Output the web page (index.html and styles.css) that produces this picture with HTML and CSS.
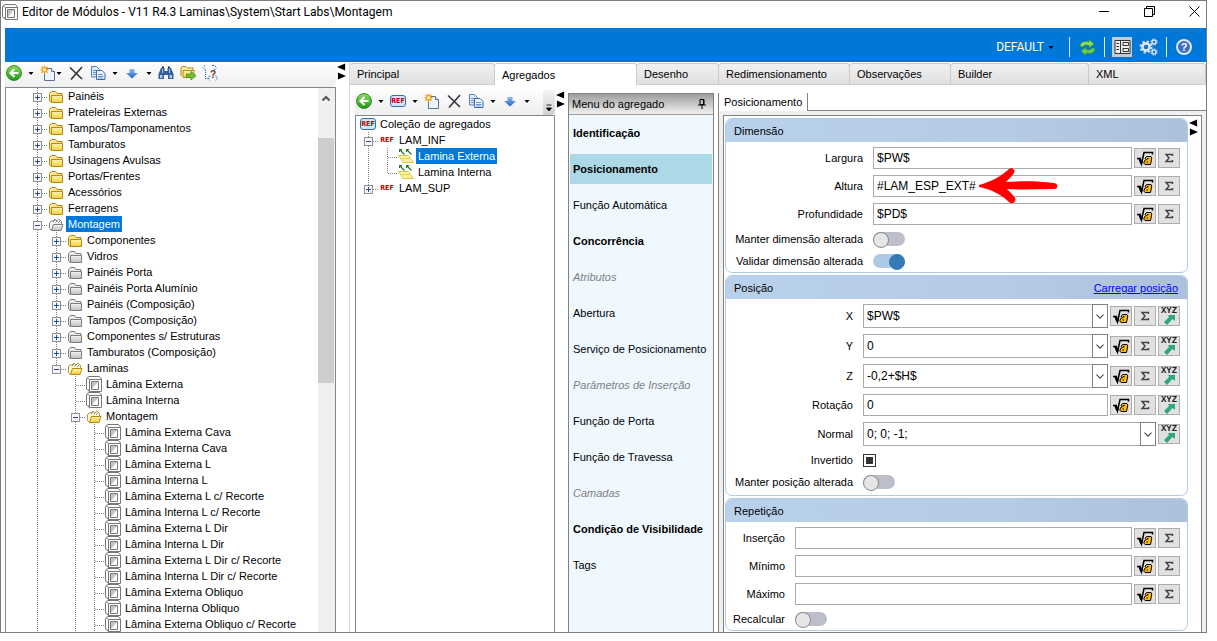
FILE: index.html
```html
<!DOCTYPE html>
<html lang="pt-BR">
	<head>
		<title>Editor de Módulos</title>
		<meta charset="utf-8">
		<meta name="viewport" content="width=device-width, initial-scale=1.0">
		<link rel="stylesheet" href="styles.css">
	</head>
	<body>
		<!-- shared icons -->
		<svg class="sprite" aria-hidden="true">
			<defs>
				<linearGradient id="gFolder" x1="0" y1="0" x2="0" y2="1"><stop offset="0" stop-color="#fff6a8"/><stop offset="1" stop-color="#f6cc40"/></linearGradient>
				<linearGradient id="gGray" x1="0" y1="0" x2="0" y2="1"><stop offset="0" stop-color="#f4f4f4"/><stop offset="1" stop-color="#bdbdbd"/></linearGradient>
				<linearGradient id="gGreen" x1="0" y1="0" x2="0" y2="1"><stop offset="0" stop-color="#8ada5c"/><stop offset="1" stop-color="#1f9a14"/></linearGradient>
				<linearGradient id="gBlue" x1="0" y1="0" x2="0" y2="1"><stop offset="0" stop-color="#8fbcf2"/><stop offset="1" stop-color="#1e5fc4"/></linearGradient>
			</defs>
			<symbol id="i-plus" viewBox="0 0 9 9"><rect x=".5" y=".5" width="8" height="8" fill="#f6f6f6" stroke="#919191"/><path d="M2 4.5h5M4.5 2v5" stroke="#2a4a9c"/></symbol>
			<symbol id="i-minus" viewBox="0 0 9 9"><rect x=".5" y=".5" width="8" height="8" fill="#f6f6f6" stroke="#919191"/><path d="M2 4.5h5" stroke="#2a4a9c"/></symbol>
			<symbol id="i-folder" viewBox="0 0 16 16"><path d="M3.5 14.5l-2-1.500V5.500l2-2h4l1.500 2h5v2" fill="#fbe88a" stroke="#a8851a"/><path d="M3.500 7.500h11v7h-11z" fill="url(#gFolder)" stroke="#b08a12"/></symbol>
			<symbol id="i-folder-gray" viewBox="0 0 16 16"><path d="M3.5 14.5l-2-1.500V5.500l2-2h4l1.500 2h5v2" fill="#e8e8e8" stroke="#7d7d7d"/><path d="M3.500 7.500h11v7h-11z" fill="url(#gGray)" stroke="#7d7d7d"/></symbol>
			<symbol id="i-open" viewBox="0 0 16 16"><path d="M3.500 14.500l-2-2V6.500l1.500-1.500h2l2-2 2 2 2-2 2.500 2.500v3" fill="#fff8d8" stroke="#b39a3c"/><path d="M5 6l2-2M7.500 6.500l2-2M10 7l2-2" stroke="#7e8fc0"/><path d="M3.500 14.500l2-6h9.500l-2 6z" fill="url(#gFolder)" stroke="#b08a12"/></symbol>
			<symbol id="i-open-gray" viewBox="0 0 16 16"><path d="M3.500 14.500l-2-2V6.500l1.500-1.500h2l2-2 2 2 2-2 2.500 2.500v3" fill="#f2f2f2" stroke="#8a8a8a"/><path d="M5 6l2-2M7.500 6.500l2-2M10 7l2-2" stroke="#808080"/><path d="M3.500 14.500l2-6h9.500l-2 6z" fill="url(#gGray)" stroke="#7d7d7d"/></symbol>
			<symbol id="i-module" viewBox="0 0 16 16"><path d="M.5 3L2.500.5h11l2 2.500v12.500h-12L.500 13z" fill="#fff" stroke="#777"/><path d="M3.500 3.500h12M3.500 3.500v12M3.500 3.500L1 1.500M3.500 15l-2-2" fill="none" stroke="#777"/><path d="M5.500 5.500h7v8h-7z" fill="#fff" stroke="#777"/><path d="M6 6h6l-6 7z" fill="#c4c4c4"/></symbol>
			<symbol id="i-piece" viewBox="0 0 16 16"><path d="M.5 7.500H10l5.500 7H5z" fill="#fbf39a" stroke="#d6ca50"/><path d="M4 10.500h8" stroke="#e2d050"/><path d="M1.500 1.500l5 5M8.500 1.500l5 5" stroke="#1c7a1c" stroke-width="1.200"/><path d="M1.500 4V1.500H4M8.500 4V1.500H11" fill="none" stroke="#1c7a1c"/></symbol>
			<symbol id="i-back" viewBox="0 0 16 16"><circle cx="8" cy="8" r="7.500" fill="url(#gGreen)" stroke="#1d8212" stroke-width=".8"/><path d="M12.500 8H5M8.500 4L4.500 8l4 4" fill="none" stroke="#fff" stroke-width="2.200"/></symbol>
			<symbol id="i-new" viewBox="0 0 16 16"><path d="M4.500 3.500h7l3 3v9h-10z" fill="#eef4fc" stroke="#5c7093"/><path d="M11.500 3.500v3h3" fill="#fff" stroke="#5c7093"/><path d="M4.500 0l1 2.300L8 1.300 7 3.800l2 1-2 1 1 2.500-2.500-1-1 2-1-2L1 8.300l1-2.500-2-1 2-1L1 1.300l2.500 1z" fill="#f0a020"/><circle cx="4.500" cy="4.800" r="1.800" fill="#fff0a0"/></symbol>
			<symbol id="i-delete" viewBox="0 0 16 16"><path d="M2 2.500L14 14M14 2L3 14.500" stroke="#333a40" stroke-width="1.700"/></symbol>
			<symbol id="i-copy" viewBox="0 0 16 16"><path d="M1.500 1.500h5l3 3v7.500h-8z" fill="#dceafb" stroke="#5580bd"/><path d="M3 5.500h4M3 7.500h4M3 9.500h3" stroke="#6d97d0"/><path d="M6.500 5.500h5.500l3 3v6h-8.500z" fill="#eaf3ff" stroke="#3c68a8"/><path d="M8 9.500h5M8 11.500h5.500M8 13h5" stroke="#6d97d0"/></symbol>
			<symbol id="i-down" viewBox="0 0 16 16"><path d="M5.500 4h5v4H14l-6 5.500L2 8h3.500z" fill="url(#gBlue)"/></symbol>
			<symbol id="i-find" viewBox="0 0 16 16"><path d="M3 3h3.500v3h3V3H13l2.500 6v5H10v-4H6v4H.500V9z" fill="#355f9c"/><path d="M4 1.500h2V3H4zM10 1.500h2V3h-2z" fill="#1c3560"/><path d="M2 10h2.500v3H2zM11.500 10H14v3h-2.500zM4 4h1v4H4zM11 4h1v4h-1z" fill="#a9c9f0"/></symbol>
			<symbol id="i-export" viewBox="0 0 16 16"><path d="M1 11V3l1-1.500h4L7.500 3H13v2" fill="#fdf0a4" stroke="#b08a12"/><path d="M3 5.500h11v7H3z" fill="url(#gFolder)" stroke="#b08a12"/><path d="M6.500 9H11V6.500l5 4.200-5 4.300v-2.500H6.500z" fill="#6fc62e" stroke="#3a7f16" stroke-width=".7"/></symbol>
			<symbol id="i-caret" viewBox="0 0 6 16"><path d="M.5 7h5L3 10z" fill="#000"/></symbol>
			<symbol id="i-root" viewBox="0 0 20 18"><path d="M2 9.500h2.500L6.500 15 9 3.500h8.500v2" fill="none" stroke="#000" stroke-width="1.500"/><path d="M4.500 9l2 5.500" stroke="#000" stroke-width="2.600"/><path d="M10 9.500l1.500-2h4.500l.8 1.500-1.300 6.500H10l-1.200-1.500.8-2.500 2-1z" fill="#fcbb12" stroke="#000"/><path d="M12 9.700h1.500M11.500 13h1.500" stroke="#000" stroke-width="1.200"/></symbol>
			<symbol id="i-sum" viewBox="0 0 12 12"><path d="M9.500 4V2.500H3L6 6 3 9.500h6.500V8" fill="none" stroke="#444" stroke-width="1.400"/></symbol>
			<symbol id="i-needle" viewBox="0 0 11 10"><path d="M4 0h7v6L8.500 4 3 10 0 7l5-5z" fill="#2ea583"/></symbol>
			<symbol id="i-chevron" viewBox="0 0 16 22"><path d="M4 9.500l4 4 4-4" fill="none" stroke="#444" stroke-width="1.200"/></symbol>
			<symbol id="i-splitter" viewBox="0 0 10 18"><path d="M9 0v8L0 4zM1 10v8l9-4z" fill="#000"/></symbol>
			<symbol id="i-pin" viewBox="0 0 10 12"><path d="M3 1.500h4v5H3zM1 7h8M5 7v4" fill="none" stroke="#000"/><path d="M6.500 1.500V7" stroke="#000"/></symbol>
		</svg>

		<div class="window">
			<header class="titlebar">
				<svg class="icon"><use href="#i-module"/></svg>
				<h1 class="title">Editor de Módulos - V11 R4.3 Laminas\System\Start Labs\Montagem</h1>
				<div class="win-buttons">
					<button class="win-btn" aria-label="Minimizar"><svg viewBox="0 0 11 11"><path d="M0 5.500h10" stroke="#000"/></svg></button>
					<button class="win-btn" aria-label="Restaurar"><svg viewBox="0 0 11 11"><path d="M.5 2.500h8v8h-8zM2.500 2.500v-2h8v8h-2" fill="none" stroke="#000"/></svg></button>
					<button class="win-btn" aria-label="Fechar"><svg viewBox="0 0 11 11"><path d="M.5.500l10 10M10.500.500l-10 10" stroke="#000"/></svg></button>
				</div>
			</header>

			<div class="ribbon">
				<button class="profile">DEFAULT <svg class="caret"><use href="#i-caret"/></svg></button>
				<span class="sep"></span>
				<button class="ribbon-btn" aria-label="Atualizar"><svg viewBox="0 0 20 20"><path d="M3 9.500c0-4 4-6 9-4.500V2.500l5 4.500-5 4V8.500c-3-1-5-.500-6 1.500z" fill="#8adc5c" stroke="#2f8f2a" stroke-width=".7"/><path d="M18 11.500c0 4-4 6-9 4.500v2.500L4 14l5-4v2.500c3 1 5 .5 6-1.500z" fill="#6cce4c" stroke="#2f8f2a" stroke-width=".7"/></svg></button>
				<span class="sep"></span>
				<button class="ribbon-btn pressed" aria-label="Propriedades"><svg viewBox="0 0 20 20"><path d="M3 3.500h15v13H3zM8.500 3.500v13" fill="#eee" stroke="#333"/><path d="M4.500 6.500h2.500M4.500 9.500h2.500M4.500 12.500h2.500M11 5.500h5.500v3H11zM11 11.500h5.500v3H11z" fill="none" stroke="#333"/></svg></button>
				<button class="ribbon-btn" aria-label="Configurações"><svg viewBox="0 0 20 20"><circle cx="7" cy="10" r="3.600" fill="none" stroke="#dfe5ee" stroke-width="2.600"/><circle cx="7" cy="10" r="5.600" fill="none" stroke="#dfe5ee" stroke-width="1.800" stroke-dasharray="2.200 2.200"/><circle cx="15" cy="5" r="2" fill="none" stroke="#dfe5ee" stroke-width="1.500"/><circle cx="15" cy="5" r="3.200" fill="none" stroke="#dfe5ee" stroke-dasharray="1.200 1.300"/><circle cx="15" cy="15" r="2" fill="none" stroke="#dfe5ee" stroke-width="1.500"/><circle cx="15" cy="15" r="3.200" fill="none" stroke="#dfe5ee" stroke-dasharray="1.200 1.300"/></svg></button>
				<span class="sep"></span>
				<button class="help" aria-label="Ajuda">?</button>
			</div>

			<div class="workspace">
				<aside class="explorer">
					<div class="toolbar">
						<button class="tool" aria-label="Voltar"><svg class="icon"><use href="#i-back"/></svg></button>
						<button class="drop" aria-label="Mais"><svg class="caret"><use href="#i-caret"/></svg></button>
						<button class="tool" aria-label="Novo"><svg class="icon"><use href="#i-new"/></svg></button>
						<button class="drop joined" aria-label="Mais"><svg class="caret"><use href="#i-caret"/></svg></button>
						<button class="tool" aria-label="Excluir"><svg class="icon"><use href="#i-delete"/></svg></button>
						<button class="tool" aria-label="Copiar"><svg class="icon"><use href="#i-copy"/></svg></button>
						<button class="drop" aria-label="Mais"><svg class="caret"><use href="#i-caret"/></svg></button>
						<button class="tool" aria-label="Mover"><svg class="icon"><use href="#i-down"/></svg></button>
						<button class="drop" aria-label="Mais"><svg class="caret"><use href="#i-caret"/></svg></button>
						<button class="tool" aria-label="Localizar"><svg class="icon"><use href="#i-find"/></svg></button>
						<button class="tool" aria-label="Exportar"><svg class="icon"><use href="#i-export"/></svg></button>
						<button class="tool" aria-label="Dependências"><svg class="icon" viewBox="0 0 16 16"><path d="M3.500 5v9M3.500 13.500h3" fill="none" stroke="#2866d8" stroke-dasharray="1 1"/><path d="M3.500 0L1 2.500 3.500 5M10 .5h2.500L15 3M12 5l2.500-2M8 10.500l-2 2.500 2 2.500M13.500 10.500l2 2.500-2 2.500" fill="none" stroke="#2866d8" stroke-dasharray="2 1"/><text x="8" y="13" class="q-text">?</text></svg></button>
					</div>
					<div class="tree-box">
						<ul class="tree modules">
							<li><div class="row"><svg class="exp"><use href="#i-plus"/></svg><svg class="icon"><use href="#i-folder"/></svg><span class="name">Painéis</span></div></li>
							<li><div class="row"><svg class="exp"><use href="#i-plus"/></svg><svg class="icon"><use href="#i-folder"/></svg><span class="name">Prateleiras Externas</span></div></li>
							<li><div class="row"><svg class="exp"><use href="#i-plus"/></svg><svg class="icon"><use href="#i-folder"/></svg><span class="name">Tampos/Tamponamentos</span></div></li>
							<li><div class="row"><svg class="exp"><use href="#i-plus"/></svg><svg class="icon"><use href="#i-folder"/></svg><span class="name">Tamburatos</span></div></li>
							<li><div class="row"><svg class="exp"><use href="#i-plus"/></svg><svg class="icon"><use href="#i-folder"/></svg><span class="name">Usinagens Avulsas</span></div></li>
							<li><div class="row"><svg class="exp"><use href="#i-plus"/></svg><svg class="icon"><use href="#i-folder"/></svg><span class="name">Portas/Frentes</span></div></li>
							<li><div class="row"><svg class="exp"><use href="#i-plus"/></svg><svg class="icon"><use href="#i-folder"/></svg><span class="name">Acessórios</span></div></li>
							<li><div class="row"><svg class="exp"><use href="#i-plus"/></svg><svg class="icon"><use href="#i-folder"/></svg><span class="name">Ferragens</span></div></li>
							<li><div class="row"><svg class="exp"><use href="#i-minus"/></svg><svg class="icon"><use href="#i-open-gray"/></svg><span class="name selected">Montagem</span></div>
								<ul>
									<li><div class="row"><svg class="exp"><use href="#i-plus"/></svg><svg class="icon"><use href="#i-folder"/></svg><span class="name">Componentes</span></div></li>
									<li><div class="row"><svg class="exp"><use href="#i-plus"/></svg><svg class="icon"><use href="#i-folder-gray"/></svg><span class="name">Vidros</span></div></li>
									<li><div class="row"><svg class="exp"><use href="#i-plus"/></svg><svg class="icon"><use href="#i-folder-gray"/></svg><span class="name">Painéis Porta</span></div></li>
									<li><div class="row"><svg class="exp"><use href="#i-plus"/></svg><svg class="icon"><use href="#i-folder-gray"/></svg><span class="name">Painéis Porta Alumínio</span></div></li>
									<li><div class="row"><svg class="exp"><use href="#i-plus"/></svg><svg class="icon"><use href="#i-folder-gray"/></svg><span class="name">Painéis (Composição)</span></div></li>
									<li><div class="row"><svg class="exp"><use href="#i-plus"/></svg><svg class="icon"><use href="#i-folder-gray"/></svg><span class="name">Tampos (Composição)</span></div></li>
									<li><div class="row"><svg class="exp"><use href="#i-plus"/></svg><svg class="icon"><use href="#i-folder-gray"/></svg><span class="name">Componentes s/ Estruturas</span></div></li>
									<li><div class="row"><svg class="exp"><use href="#i-plus"/></svg><svg class="icon"><use href="#i-folder-gray"/></svg><span class="name">Tamburatos (Composição)</span></div></li>
									<li class="last"><div class="row"><svg class="exp"><use href="#i-minus"/></svg><svg class="icon"><use href="#i-open"/></svg><span class="name">Laminas</span></div>
										<ul>
											<li><div class="row leaf"><svg class="icon"><use href="#i-module"/></svg><span class="name">Lâmina Externa</span></div></li>
											<li><div class="row leaf"><svg class="icon"><use href="#i-module"/></svg><span class="name">Lâmina Interna</span></div></li>
											<li><div class="row"><svg class="exp"><use href="#i-minus"/></svg><svg class="icon"><use href="#i-open"/></svg><span class="name">Montagem</span></div>
												<ul>
													<li><div class="row leaf"><svg class="icon"><use href="#i-module"/></svg><span class="name">Lâmina Externa Cava</span></div></li>
													<li><div class="row leaf"><svg class="icon"><use href="#i-module"/></svg><span class="name">Lâmina Interna Cava</span></div></li>
													<li><div class="row leaf"><svg class="icon"><use href="#i-module"/></svg><span class="name">Lâmina Externa L</span></div></li>
													<li><div class="row leaf"><svg class="icon"><use href="#i-module"/></svg><span class="name">Lâmina Interna L</span></div></li>
													<li><div class="row leaf"><svg class="icon"><use href="#i-module"/></svg><span class="name">Lâmina Externa L c/ Recorte</span></div></li>
													<li><div class="row leaf"><svg class="icon"><use href="#i-module"/></svg><span class="name">Lâmina Interna L c/ Recorte</span></div></li>
													<li><div class="row leaf"><svg class="icon"><use href="#i-module"/></svg><span class="name">Lâmina Externa L Dir</span></div></li>
													<li><div class="row leaf"><svg class="icon"><use href="#i-module"/></svg><span class="name">Lâmina Interna L Dir</span></div></li>
													<li><div class="row leaf"><svg class="icon"><use href="#i-module"/></svg><span class="name">Lâmina Externa L Dir c/ Recorte</span></div></li>
													<li><div class="row leaf"><svg class="icon"><use href="#i-module"/></svg><span class="name">Lâmina Interna L Dir c/ Recorte</span></div></li>
													<li><div class="row leaf"><svg class="icon"><use href="#i-module"/></svg><span class="name">Lâmina Externa Obliquo</span></div></li>
													<li><div class="row leaf"><svg class="icon"><use href="#i-module"/></svg><span class="name">Lâmina Interna Obliquo</span></div></li>
													<li><div class="row leaf"><svg class="icon"><use href="#i-module"/></svg><span class="name">Lâmina Externa Obliquo c/ Recorte</span></div></li>
												</ul>
											</li>
										</ul>
									</li>
								</ul>
							</li>
						</ul>
						<div class="scrollbar">
							<svg viewBox="0 0 16 20"><path d="M4.500 12.500L8 9l3.500 3.500" fill="none" stroke="#555" stroke-width="2"/></svg>
							<div class="thumb"></div>
						</div>
					</div>
				</aside>

				<svg class="splitter"><use href="#i-splitter"/></svg>

				<main class="editor">
					<nav class="tabs">
						<button class="tab">Principal</button>
						<button class="tab active">Agregados</button>
						<button class="tab">Desenho</button>
						<button class="tab">Redimensionamento</button>
						<button class="tab">Observações</button>
						<button class="tab">Builder</button>
						<button class="tab">XML</button>
					</nav>

					<div class="panes">
						<section class="aggregates">
							<div class="toolbar">
								<button class="tool" aria-label="Voltar"><svg class="icon"><use href="#i-back"/></svg></button>
								<button class="drop" aria-label="Mais"><svg class="caret"><use href="#i-caret"/></svg></button>
								<button class="ref boxed">REF</button>
								<button class="drop" aria-label="Mais"><svg class="caret"><use href="#i-caret"/></svg></button>
								<button class="tool" aria-label="Novo"><svg class="icon"><use href="#i-new"/></svg></button>
								<button class="tool" aria-label="Excluir"><svg class="icon"><use href="#i-delete"/></svg></button>
								<button class="tool" aria-label="Copiar"><svg class="icon"><use href="#i-copy"/></svg></button>
								<button class="drop" aria-label="Mais"><svg class="caret"><use href="#i-caret"/></svg></button>
								<button class="tool" aria-label="Mover"><svg class="icon"><use href="#i-down"/></svg></button>
								<button class="drop" aria-label="Mais"><svg class="caret"><use href="#i-caret"/></svg></button>
								<button class="overflow" aria-label="Mais opções"><svg viewBox="0 0 6 8"><path d="M.5 1h5M.500 4h5L3 7z" fill="#000" stroke="#000" stroke-width=".8"/></svg></button>
							</div>
							<div class="tree-box">
								<div class="tree">
									<div class="row root"><span class="ref boxed">REF</span><span class="name">Coleção de agregados</span></div>
									<ul class="agg-list">
										<li><div class="row"><svg class="exp"><use href="#i-minus"/></svg><span class="ref">REF</span><span class="name">LAM_INF</span></div>
											<ul>
												<li><div class="row leaf"><svg class="icon"><use href="#i-piece"/></svg><span class="name selected">Lamina Externa</span></div></li>
												<li class="last"><div class="row leaf"><svg class="icon"><use href="#i-piece"/></svg><span class="name">Lamina Interna</span></div></li>
											</ul>
										</li>
										<li class="last"><div class="row"><svg class="exp"><use href="#i-plus"/></svg><span class="ref">REF</span><span class="name">LAM_SUP</span></div></li>
									</ul>
								</div>
							</div>
						</section>

						<svg class="splitter"><use href="#i-splitter"/></svg>

						<section class="menu">
							<h2 class="menu-head">Menu do agregado <svg class="pin"><use href="#i-pin"/></svg></h2>
							<a href="#" class="menu-item strong">Identificação</a>
							<a href="#" class="menu-item strong current">Posicionamento</a>
							<a href="#" class="menu-item">Função Automática</a>
							<a href="#" class="menu-item strong">Concorrência</a>
							<a href="#" class="menu-item off">Atributos</a>
							<a href="#" class="menu-item">Abertura</a>
							<a href="#" class="menu-item">Serviço de Posicionamento</a>
							<a href="#" class="menu-item off">Parâmetros de Inserção</a>
							<a href="#" class="menu-item">Função de Porta</a>
							<a href="#" class="menu-item">Função de Travessa</a>
							<a href="#" class="menu-item off">Camadas</a>
							<a href="#" class="menu-item strong">Condição de Visibilidade</a>
							<a href="#" class="menu-item">Tags</a>
						</section>

						<section class="details">
							<div class="subtabs"><button class="subtab">Posicionamento</button></div>
							<div class="sheet">
								<form class="groups">
									<div class="group dimension">
										<div class="group-head"><h3>Dimensão</h3></div>
										<div class="fields">
											<div class="field">
												<label for="largura">Largura</label>
												<input type="text" id="largura" value="$PW$">
												<button type="button" class="fx" aria-label="Fórmula"><svg><use href="#i-root"/></svg></button>
												<button type="button" class="fx" aria-label="Soma"><svg class="sum"><use href="#i-sum"/></svg></button>
											</div>
											<div class="field">
												<label for="altura">Altura</label>
												<div class="marked">
													<input type="text" id="altura" value="#LAM_ESP_EXT#">
													<svg class="pointer" viewBox="0 0 80 38"><path d="M1 18C13 15 25 8 31 2c2-2 7 0 5 4-2 3-5 6-8 9 16-1 32-1 48 1 5 1 4 6 0 6-16 0-32 1-47 0 3 3 6 6 8 9 2 4-3 7-6 4C24 28 13 22 1 20z" fill="#ff0000"/></svg>
												</div>
												<button type="button" class="fx" aria-label="Fórmula"><svg><use href="#i-root"/></svg></button>
												<button type="button" class="fx" aria-label="Soma"><svg class="sum"><use href="#i-sum"/></svg></button>
											</div>
											<div class="field">
												<label for="profundidade">Profundidade</label>
												<input type="text" id="profundidade" value="$PD$">
												<button type="button" class="fx" aria-label="Fórmula"><svg><use href="#i-root"/></svg></button>
												<button type="button" class="fx" aria-label="Soma"><svg class="sum"><use href="#i-sum"/></svg></button>
											</div>
											<div class="field check">
												<label for="manter-dim">Manter dimensão alterada</label>
												<input type="checkbox" class="toggle" id="manter-dim">
											</div>
											<div class="field check">
												<label for="validar-dim">Validar dimensão alterada</label>
												<input type="checkbox" class="toggle" id="validar-dim" checked>
											</div>
										</div>
									</div>

									<div class="group position">
										<div class="group-head"><h3>Posição</h3><a href="#">Carregar posição</a></div>
										<div class="fields">
											<div class="field">
												<label for="pos-x">X</label>
												<div class="combo"><select id="pos-x"><option>$PW$</option></select><svg><use href="#i-chevron"/></svg></div>
												<button type="button" class="fx" aria-label="Fórmula"><svg><use href="#i-root"/></svg></button>
												<button type="button" class="fx" aria-label="Soma"><svg class="sum"><use href="#i-sum"/></svg></button>
												<button type="button" class="fx xyz">XYZ<svg><use href="#i-needle"/></svg></button>
											</div>
											<div class="field">
												<label for="pos-y">Y</label>
												<div class="combo"><select id="pos-y"><option>0</option></select><svg><use href="#i-chevron"/></svg></div>
												<button type="button" class="fx" aria-label="Fórmula"><svg><use href="#i-root"/></svg></button>
												<button type="button" class="fx" aria-label="Soma"><svg class="sum"><use href="#i-sum"/></svg></button>
												<button type="button" class="fx xyz">XYZ<svg><use href="#i-needle"/></svg></button>
											</div>
											<div class="field">
												<label for="pos-z">Z</label>
												<div class="combo"><select id="pos-z"><option>-0,2+$H$</option></select><svg><use href="#i-chevron"/></svg></div>
												<button type="button" class="fx" aria-label="Fórmula"><svg><use href="#i-root"/></svg></button>
												<button type="button" class="fx" aria-label="Soma"><svg class="sum"><use href="#i-sum"/></svg></button>
												<button type="button" class="fx xyz">XYZ<svg><use href="#i-needle"/></svg></button>
											</div>
											<div class="field">
												<label for="rotacao">Rotação</label>
												<input type="text" id="rotacao" value="0">
												<button type="button" class="fx" aria-label="Fórmula"><svg><use href="#i-root"/></svg></button>
												<button type="button" class="fx" aria-label="Soma"><svg class="sum"><use href="#i-sum"/></svg></button>
												<button type="button" class="fx xyz">XYZ<svg><use href="#i-needle"/></svg></button>
											</div>
											<div class="field">
												<label for="normal">Normal</label>
												<div class="combo"><select id="normal"><option>0; 0; -1;</option></select><svg><use href="#i-chevron"/></svg></div>
												<button type="button" class="fx xyz">XYZ<svg><use href="#i-needle"/></svg></button>
											</div>
											<div class="field check">
												<label for="invertido">Invertido</label>
												<input type="checkbox" class="tristate" id="invertido">
											</div>
											<div class="field check">
												<label for="manter-pos">Manter posição alterada</label>
												<input type="checkbox" class="toggle" id="manter-pos">
											</div>
										</div>
									</div>

									<div class="group repeat">
										<div class="group-head"><h3>Repetição</h3></div>
										<div class="fields">
											<div class="field">
												<label for="insercao">Inserção</label>
												<input type="text" id="insercao">
												<button type="button" class="fx" aria-label="Fórmula"><svg><use href="#i-root"/></svg></button>
												<button type="button" class="fx" aria-label="Soma"><svg class="sum"><use href="#i-sum"/></svg></button>
											</div>
											<div class="field">
												<label for="minimo">Mínimo</label>
												<input type="text" id="minimo">
												<button type="button" class="fx" aria-label="Fórmula"><svg><use href="#i-root"/></svg></button>
												<button type="button" class="fx" aria-label="Soma"><svg class="sum"><use href="#i-sum"/></svg></button>
											</div>
											<div class="field">
												<label for="maximo">Máximo</label>
												<input type="text" id="maximo">
												<button type="button" class="fx" aria-label="Fórmula"><svg><use href="#i-root"/></svg></button>
												<button type="button" class="fx" aria-label="Soma"><svg class="sum"><use href="#i-sum"/></svg></button>
											</div>
											<div class="field check">
												<label for="recalcular">Recalcular</label>
												<input type="checkbox" class="toggle" id="recalcular">
											</div>
										</div>
									</div>
								</form>
								<svg class="splitter"><use href="#i-splitter"/></svg>
							</div>
						</section>
					</div>
				</main>
			</div>
		</div>
	</body>
</html>
```
FILE: styles.css
```css
* {
	box-sizing: border-box;
}
body {
	margin: 0;
	height: 100vh;
	padding: 0 10px 8px 0;
	background-color: #ffffff;
	color: #000000;
	font-family: "Liberation Sans", Arial, sans-serif;
	font-size: 11px;
	line-height: 14px;
	overflow: hidden;
}
button, input, select {
	font: inherit;
	color: inherit;
}
button {
	display: flex;
	align-items: center;
	justify-content: center;
	padding: 0;
	border: none;
	background: none;
}
h1, h2, h3, ul {
	margin: 0;
	padding: 0;
	font-size: 11px;
	font-weight: normal;
	list-style: none;
}
svg {
	display: block;
	flex: none;
}
.sprite {
	position: absolute;
	width: 0;
	height: 0;
}
.icon {
	width: 16px;
	height: 16px;
}
.caret {
	width: 6px;
	height: 16px;
}
.ref {
	flex: none;
	width: 16px;
	height: 12px;
	color: #c00000;
	font: bold 7px "DejaVu Sans Condensed", "DejaVu Sans", sans-serif;
	line-height: 12px;
	text-align: center;
}
.ref.boxed {
	border: 1px solid #2f6fb4;
	border-radius: 3px;
	background-color: #cfe6fb;
	line-height: 10px;
}
.q-text {
	font: bold 10px "Liberation Sans", sans-serif;
	fill: #6b3a12;
}

/* window frame */
.window {
	height: 100%;
	display: flex;
	flex-direction: column;
	padding-left: 4px;
	border: 1px solid #7a7a7a;
	overflow: hidden;
}
.titlebar {
	flex: none;
	display: flex;
	align-items: center;
	gap: 4px;
	height: 27px;
	margin-left: -3px;
	padding: 0 6px 6px 0;
}
.title {
	flex: 1;
	font-family: Roboto, "Noto Sans", sans-serif;
	font-size: 12px;
	line-height: 16px;
	white-space: nowrap;
}
.win-buttons {
	display: flex;
	gap: 34px;
}
.win-btn svg {
	width: 11px;
	height: 11px;
}
.ribbon {
	flex: none;
	display: flex;
	align-items: center;
	justify-content: flex-end;
	gap: 7px;
	height: 34px;
	padding: 4px 12px 0 0;
	background-color: #0078d7;
}
.profile {
	gap: 4px;
	margin-right: 8px;
	color: #ffffff;
	font-family: Roboto, "Noto Sans", sans-serif;
	font-size: 12px;
}
.sep {
	width: 1px;
	height: 20px;
	background-color: #dfe9f3;
}
.ribbon-btn, .ribbon-btn svg {
	width: 20px;
	height: 20px;
}
.pressed {
	background-color: #c3cbd6;
}
.help {
	width: 16px;
	height: 16px;
	margin: 0 2px;
	border: 2px solid #dfe8f6;
	border-radius: 50%;
	background-color: #3a6cc8;
	color: #ffffff;
	font-weight: bold;
}
.workspace {
	flex: 1;
	min-height: 0;
	display: grid;
	grid-template-columns: 331fr 13px 857fr;
}
.splitter {
	width: 9px;
	height: 17px;
	margin: 1px 0 0 1px;
}

/* toolbars */
.toolbar {
	flex: none;
	display: flex;
	align-items: center;
	gap: 6px;
	height: 25px;
	padding: 0 0 3px 1px;
	border-radius: 0 4px 4px 0;
	background: linear-gradient(#fdfdfd, #efefef);
}
.joined {
	margin-left: -6px;
}
.overflow {
	align-self: stretch;
	align-items: flex-end;
	width: 12px;
	margin: 0 0 -3px auto;
	padding-bottom: 3px;
	border-radius: 0 4px 4px 0;
	background: linear-gradient(#f4f4f4, #cfcfcf);
}
.overflow svg {
	width: 6px;
	height: 8px;
}

/* trees */
.explorer, .aggregates {
	min-width: 0;
	min-height: 0;
	display: flex;
	flex-direction: column;
}
.tree-box {
	flex: 1;
	min-height: 0;
	display: flex;
	border: 1px solid #828790;
	border-bottom: none;
	overflow: hidden;
}
.tree {
	flex: 1;
	min-width: 0;
}
.modules {
	padding-left: 27px;
}
.agg-list {
	padding-left: 8px;
}
.tree li {
	background: repeating-linear-gradient(#808080 0 1px, transparent 1px 2px) 4px 0 / 1px 100% no-repeat;
}
.tree li.last {
	background-size: 1px 10px;
}
.tree li ul {
	padding-left: 19px;
}
.row {
	display: flex;
	align-items: center;
	height: 16px;
	background: repeating-linear-gradient(90deg, #808080 0 1px, transparent 1px 2px) 5px 9px / 10px 1px no-repeat;
	white-space: nowrap;
}
.row .icon, .row .ref {
	margin-left: 6px;
}
.row.leaf .icon {
	margin-left: 15px;
}
.row.root {
	background: none;
}
.row.root .ref {
	margin-left: 4px;
}
.exp {
	width: 9px;
	height: 9px;
	margin-top: 2px;
}
.name {
	height: 16px;
	margin-left: 2px;
	padding: 0 2px;
	line-height: 16px;
}
.selected {
	background-color: #0078d7;
	color: #ffffff;
}
.scrollbar {
	display: flex;
	flex-direction: column;
	width: 17px;
	background-color: #f0f0f0;
}
.scrollbar svg {
	width: 16px;
	height: 20px;
}
.thumb {
	height: 45%;
	margin: 30px 1px 0 0;
	background-color: #cdcdcd;
}

/* main tabs */
.editor {
	min-width: 0;
	min-height: 0;
	display: flex;
	flex-direction: column;
	border-left: 1px solid #d9d9d9;
}
.tabs {
	flex: none;
	display: grid;
	grid-template-columns: 145fr 142fr 82fr 131fr 101fr 138fr 117fr;
	height: 23px;
	border-bottom: 1px solid #d0d0d0;
}
.tab {
	justify-content: flex-start;
	margin-top: 1px;
	padding-left: 7px;
	border: 1px solid #c9c9c9;
	border-width: 1px 1px 0 0;
	border-radius: 3px 3px 0 0;
	background: linear-gradient(#f1f1f1, #e0e0e0);
}
.tab.active {
	margin-bottom: -1px;
	background: #ffffff;
}
.panes {
	flex: 1;
	min-height: 0;
	display: grid;
	grid-template-columns: 200fr 13px 146fr 4px 488fr;
	padding: 5px 0 0 5px;
}
.panes > .splitter {
	margin-top: 1px;
}

/* aggregate menu */
.menu {
	min-width: 0;
	margin-top: 3px;
	display: flex;
	flex-direction: column;
	gap: 6px;
	border: 1px solid #828282;
	border-bottom: none;
	background-color: #f0f8ff;
	overflow: hidden;
}
.menu-head {
	display: flex;
	flex: none;
	align-items: center;
	justify-content: space-between;
	height: 21px;
	margin-bottom: -3px;
	padding: 0 6px 0 3px;
	border-bottom: 1px solid #9a9a9a;
	background: linear-gradient(#9c9c9c, #f2f2f2);
}
.pin {
	width: 10px;
	height: 12px;
}
.menu-item {
	display: flex;
	flex: none;
	align-items: center;
	height: 30px;
	margin: 0 1px;
	padding-left: 3px;
	color: #000000;
	text-decoration: none;
	white-space: nowrap;
}
.strong {
	font-weight: bold;
}
.off {
	color: #808080;
	font-style: italic;
}
.current {
	background-color: #add8e6;
}

/* positioning sheet */
.details {
	grid-column: 5;
	min-width: 0;
	min-height: 0;
	margin-top: 3px;
	display: flex;
	flex-direction: column;
	border-left: 1px solid #828282;
	background-color: #f0f0f0;
}
.subtabs {
	flex: none;
	display: flex;
	height: 18px;
	background-color: #ffffff;
}
.subtabs::after {
	content: "";
	flex: 1;
	border-bottom: 1px solid #828282;
}
.subtab {
	padding: 0 5px;
	border-right: 1px solid #828282;
}
.sheet {
	flex: 1;
	min-height: 0;
	display: flex;
	align-items: flex-start;
	margin: 4px 4px 0 4px;
	padding: 2px 3px 0 1px;
	border: 1px solid #828282;
	border-bottom: none;
	background-color: #ffffff;
	overflow: hidden;
}
.groups {
	flex: 1;
	display: flex;
	flex-direction: column;
	gap: 2px;
}
.group {
	border: 1px solid #b0cbe8;
	border-radius: 7px;
	overflow: hidden;
}
.group-head {
	display: flex;
	align-items: center;
	justify-content: space-between;
	height: 23px;
	padding: 0 9px 0 8px;
	background: linear-gradient(90deg, #b9d1ec, #b6cbe5 60%, #adc0dc);
}
.group-head a {
	color: #0000ff;
}
.fields {
	display: flex;
	flex-direction: column;
	gap: 6px;
	padding: 5px 7px 3px 7px;
}
.field {
	display: flex;
	align-items: center;
	gap: 2px;
}
.field label {
	flex: none;
	margin-right: 6px;
	padding-right: 2px;
	text-align: right;
	white-space: nowrap;
}
.dimension label {
	width: 132px;
}
.position label {
	width: 122px;
}
.position .fields {
	padding-bottom: 5px;
}
.repeat label {
	width: 54px;
}
.check {
	height: 16px;
}
.field input[type="text"], .combo, .marked {
	flex: 1;
	min-width: 0;
}
.field input[type="text"], .combo select {
	width: 100%;
	height: 22px;
	padding: 0 3px;
	border: 1px solid #ababab;
	background-color: #ffffff;
	font-size: 12px;
}
.combo {
	position: relative;
}
.combo select {
	display: block;
	height: 24px;
	appearance: none;
	border-radius: 0;
}
.combo svg {
	position: absolute;
	top: 0;
	right: 0;
	width: 16px;
	height: 24px;
	border: 1px solid #808080;
	pointer-events: none;
}
.marked {
	position: relative;
	display: flex;
}
.pointer {
	position: absolute;
	top: -8px;
	left: 105px;
	width: 80px;
	height: 38px;
}
.fx {
	flex: none;
	width: 22px;
	height: 20px;
	border: 1px solid #adadad;
	background-color: #e1e1e1;
}
.fx svg {
	width: 20px;
	height: 18px;
}
.fx .sum {
	width: 12px;
	height: 12px;
}
.xyz {
	flex-direction: column;
	color: #222222;
	font: bold 9px "Liberation Mono", monospace;
	line-height: 8px;
}
.xyz svg {
	width: 11px;
	height: 10px;
}
.toggle {
	appearance: none;
	width: 32px;
	height: 14px;
	margin: 0;
	border-radius: 7px;
	background-color: #bcbec9;
}
.toggle::before {
	content: "";
	display: block;
	width: 14px;
	height: 14px;
	border: 1px solid #8a8a8a;
	border-radius: 50%;
	background-color: #e6e6e6;
}
.toggle:checked {
	background-color: #adc9e4;
}
.toggle:checked::before {
	margin-left: auto;
	border-color: #337ab7;
	background-color: #337ab7;
}
.tristate {
	appearance: none;
	width: 13px;
	height: 13px;
	margin: 0;
	padding: 2px;
	border: 1px solid #333333;
	background: #333333 content-box;
}
```
